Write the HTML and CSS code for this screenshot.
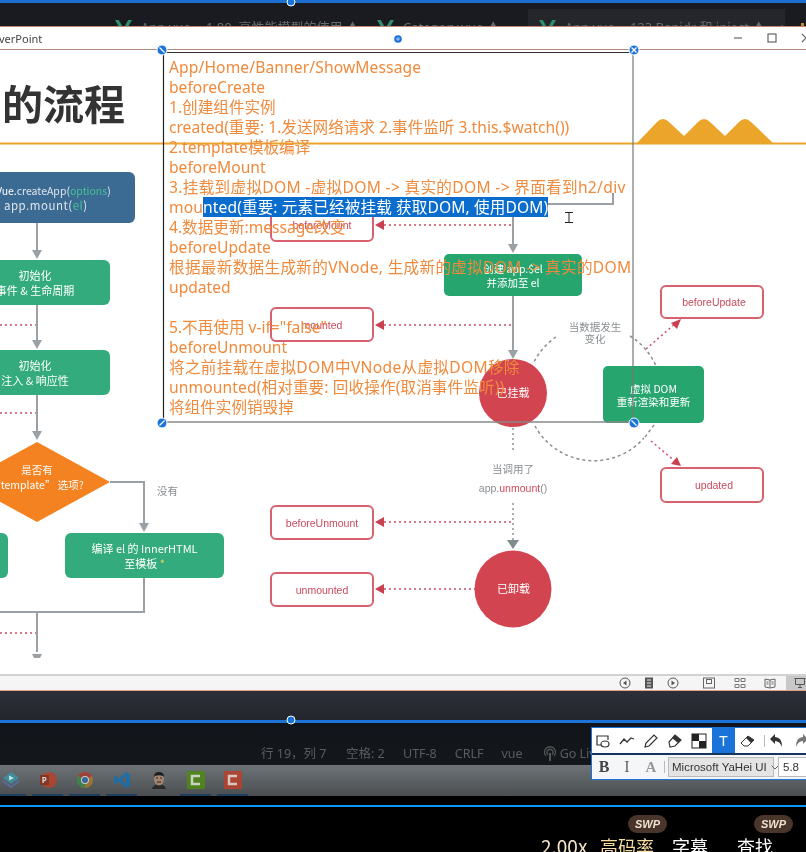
FILE: index.html
```html
<!DOCTYPE html>
<html lang="zh-CN">
<head>
    <meta charset="UTF-8">
    <meta name="viewport" content="width=device-width, initial-scale=1.0">
    <title>Vue lifecycle slide</title>
    <link rel="stylesheet" href="styles.css">
</head>
<body>
<div class="screen">

    <!-- editor tabs behind the slide window -->
    <div class="tabs">
        <div class="tab tab-one">
            <svg class="vue" viewBox="0 0 18 16"><path d="M0 0h4l5 9 5-9h4L9 16z" fill="#2f8f6b"/></svg>
            <span>App.vue -- 1.80. 高性能模型的使用 ▲</span>
        </div>
        <div class="tab tab-two">
            <svg class="vue" viewBox="0 0 18 16"><path d="M0 0h4l5 9 5-9h4L9 16z" fill="#2f8f6b"/></svg>
            <span>Category.vue ▲</span>
        </div>
        <div class="tab tab-three">
            <svg class="vue" viewBox="0 0 18 16"><path d="M0 0h4l5 9 5-9h4L9 16z" fill="#2f8f6b"/></svg>
            <span>App.vue -- 123 Banidr 和 inject ▲</span>
            <span class="tab-x">×</span>
        </div>
    </div>

    <div class="ppt">
        <div class="ppt-title">
            <span class="ppt-name">verPoint</span>
            <div class="win-btns">
                <svg class="win-btn" viewBox="0 0 12 12"><path d="M2 6h8" stroke="#666" stroke-width="1.2"/></svg>
                <svg class="win-btn" viewBox="0 0 12 12"><rect x="2" y="2" width="8" height="8" fill="none" stroke="#666" stroke-width="1.2"/></svg>
                <svg class="win-btn" viewBox="0 0 12 12"><path d="M2 2l8 8M10 2l-8 8" stroke="#666" stroke-width="1.2"/></svg>
            </div>
        </div>

        <div class="slide">
            <h1 class="slide-title">的流程</h1>

            <svg class="wires" viewBox="0 50 806 624">
                <!-- header rule and mountains -->
                <path d="M637 143 L657 122 Q663 116 669 122 L684 136 L698 122 Q704 116 710 122 L725 136 L739 122 Q745 116 751 122 L773 143 Z" fill="#eca52b"/>
                <path d="M0 143.500H806" stroke="#eca52b" stroke-width="2"/>

                <!-- left flow -->
                <g class="wire">
                    <path d="M37 223V252M37 305V345M37 395V436M110 482H144V526M144 578V612H0M37 612V652"/>
                </g>
                <g class="head-gray">
                    <path d="M32 250H42L37 259Z"/>
                    <path d="M32 340H42L37 349Z"/>
                    <path d="M32 431H42L37 440Z"/>
                    <path d="M139 523H149L144 532Z"/>
                    <path d="M32 654H42L40 658H34Z"/>
                </g>
                <g class="dots-pink">
                    <path d="M0 325H36M0 413H36M0 633H36"/>
                </g>

                <!-- centre flow -->
                <g class="wire">
                    <path d="M513 217V246M513 296V352M548 204H613V193"/>
                </g>
                <g class="head-gray">
                    <path d="M508 244H518L513 253Z"/>
                    <path d="M508 350H518L513 359Z"/>
                </g>
                <g class="dots-red">
                    <path d="M384 225H513M384 325H513M384 522H513M384 589H475"/>
                    <path d="M646 349L676 323M651 441L677 463"/>
                </g>
                <g class="head-red">
                    <path d="M384 220V230L375 225Z"/>
                    <path d="M384 320V330L375 325Z"/>
                    <path d="M384 517V527L375 522Z"/>
                    <path d="M384 584V594L375 589Z"/>
                    <path d="M671 323L681 319L677 329Z"/>
                    <path d="M671 464L681 466L677 457Z"/>
                </g>

                <!-- update loop -->
                <g class="dash-gray">
                    <path d="M556 337A67 67 0 0 0 533 364"/>
                    <path d="M630 336A67 67 0 0 1 656 366"/>
                    <path d="M535 426A67 67 0 0 0 644 438"/>
                    <path d="M645 437L654 425"/>
                </g>
                <g class="dots-gray">
                    <path d="M513 428V452M513 503V541"/>
                </g>
                <path d="M507 540H519L513 549Z" fill="#7f8c8d"/>

                <circle cx="513" cy="393" r="34" fill="#d2444f"/>
                <circle cx="513" cy="589" r="38.500" fill="#d2444f"/>
            </svg>

            <div class="node blue-box n-create">
                <span><i class="wh">Vue.</i>createApp(<i class="gn">options</i>)</span>
                <span class="sub-line">app.mount(<i class="gn">el</i>)</span>
            </div>
            <div class="node green n-init1"><span>初始化</span><span>事件 &amp; 生命周期</span></div>
            <div class="node green n-init2"><span>初始化</span><span>注入 &amp; 响应性</span></div>
            <svg class="diamond" viewBox="0 0 146 80"><path d="M73 0L146 40L73 80L0 40Z" fill="#f58220"/></svg>
            <div class="node n-diamond"><span>是否有</span><span>“template” 选项?</span></div>
            <span class="label n-no">没有</span>
            <div class="node green n-left"></div>
            <div class="node green n-compile"><span>编译 el 的 InnerHTML</span><span>至模板 <i class="star">*</i></span></div>

            <div class="hook n-bm">beforeMount</div>
            <div class="hook n-m">mounted</div>
            <div class="hook n-bun">beforeUnmount</div>
            <div class="hook n-un">unmounted</div>
            <div class="hook n-bu">beforeUpdate</div>
            <div class="hook n-u">updated</div>

            <div class="node dark-green n-el"><span>创建 app.$el</span><span>并添加至 el</span></div>
            <div class="node dark-green n-vdom"><span>虚拟 DOM</span><span>重新渲染和更新</span></div>
            <div class="node n-mounted"><span>已挂载</span></div>
            <div class="node n-unmounted"><span>已卸载</span></div>

            <div class="label n-change"><span>当数据发生</span><span>变化</span></div>
            <div class="label n-call"><span>当调用了</span><span class="call-code">app.<i class="red">unmount</i>()</span></div>

            <!-- text box drawn on top of the slide -->
            <div class="notes">
                <div class="loose-s">App/Home/Banner/ShowMessage</div>
                <div>beforeCreate</div>
                <div>1.创建组件实例</div>
                <div>created(重要: 1.发送网络请求 2.事件监听 3.this.$watch())</div>
                <div>2.template模板编译</div>
                <div>beforeMount</div>
                <div class="loose">3.挂载到虚拟DOM -虚拟DOM -&gt; 真实的DOM -&gt; 界面看到h2/div</div>
                <div class="loose-s">mou<span class="picked">nted(重要: 元素已经被挂载 获取DOM, 使用DOM)</span></div>
                <div>4.数据更新:message改变</div>
                <div>beforeUpdate</div>
                <div class="loose">根据最新数据生成新的VNode, 生成新的虚拟DOM -&gt; 真实的DOM</div>
                <div>updated</div>
                <div>&nbsp;</div>
                <div>5.不再使用 v-if="false"</div>
                <div>beforeUnmount</div>
                <div class="loose">将之前挂载在虚拟DOM中VNode从虚拟DOM移除</div>
                <div class="loose-s">unmounted(相对重要: 回收操作(取消事件监听))</div>
                <div>将组件实例销毁掉</div>
            </div>
        </div>

        <div class="ppt-status">
            <svg class="st-icon" viewBox="0 0 12 12"><circle cx="6" cy="6" r="5" fill="none" stroke="#555"/><path d="M7.500 3.500V8.500L4 6Z" fill="#555"/></svg>
            <svg class="st-icon st-list" viewBox="0 0 12 12"><rect x="2" y="0.500" width="8" height="11" fill="#555"/><path d="M4 3H8M4 6H8M4 9H8" stroke="#eee"/></svg>
            <svg class="st-icon st-next" viewBox="0 0 12 12"><circle cx="6" cy="6" r="5" fill="none" stroke="#555"/><path d="M4.500 3.500V8.500L8 6Z" fill="#555"/></svg>
            <svg class="st-icon st-normal" viewBox="0 0 12 12"><rect x="0.500" y="1" width="11" height="10" fill="none" stroke="#666"/><rect x="3.500" y="2.500" width="5" height="4" fill="none" stroke="#666"/></svg>
            <svg class="st-icon st-sorter" viewBox="0 0 12 12"><path d="M1 1.500h4v3H1zM7 1.500h4v3H7zM1 7.500h4v3H1zM7 7.500h4v3H7z" fill="none" stroke="#777"/></svg>
            <svg class="st-icon st-read" viewBox="0 0 12 12"><path d="M1 2l5 1 5-1v8l-5 1-5-1zM6 3v8M2.500 5H4.500M7.500 5H9.500M2.500 7H4.500M7.500 7H9.500" fill="none" stroke="#666"/></svg>
            <div class="st-show">
                <svg class="st-icon" viewBox="0 0 12 12"><path d="M0.500 1.500H11.500M1.500 1.500V7.500H10.500V1.500M6 7.500V10.500M4 10.500H8" fill="none" stroke="#555"/></svg>
            </div>
        </div>
    </div>

    <div class="gap"></div>
    <div class="rule-blue"></div>

    <div class="vs-status">
        <span class="st-a">行 19，列 7</span>
        <span class="st-b">空格: 2</span>
        <span class="st-c">UTF-8</span>
        <span class="st-c">CRLF</span>
        <span class="st-c">vue</span>
        <svg class="live" viewBox="0 0 14 16"><path d="M3 10A5.500 5.500 0 1 1 11 10M5 8.500A3 3 0 1 1 9 8.500" fill="none" stroke="#555" stroke-width="1.300"/><path d="M6 7H8V15H6Z" fill="#555"/></svg>
        <span class="st-live">Go Live</span>
    </div>

    <div class="taskbar">
        <div class="task on">
            <svg viewBox="0 0 18 18"><path d="M9 1L17 7L9 13L1 7Z" fill="#3c92a8"/><path d="M1 10L9 16L17 10" fill="none" stroke="#5a6fa8" stroke-width="2"/><path d="M7 4.500L12 7L7 9.500Z" fill="#cfe"/></svg>
        </div>
        <div class="task on">
            <svg viewBox="0 0 18 18"><circle cx="10" cy="9" r="8" fill="#b5432a"/><rect x="1" y="4" width="9" height="10" fill="#8c2f1c"/><text x="2.800" y="12" class="ppt-p">P</text></svg>
        </div>
        <div class="task on">
            <svg viewBox="0 0 18 18"><circle cx="9" cy="9" r="8" fill="#a9772a"/><path d="M9 9L2.100 5A8 8 0 0 1 15.900 5Z" fill="#a83a30"/><path d="M9 9L2.100 5A8 8 0 0 0 9 17Z" fill="#3a8a4a"/><circle cx="9" cy="9" r="4" fill="#dcdcdc"/><circle cx="9" cy="9" r="3" fill="#3269a8"/></svg>
        </div>
        <div class="task on">
            <svg viewBox="0 0 18 18"><path d="M13 1L17 3V15L13 17L6 10.500L2.500 13.500L1 12.500V5.500L2.500 4.500L6 7.500ZM13 5.500L9 9L13 12.500Z" fill="#1a6fae"/></svg>
        </div>
        <div class="task">
            <svg viewBox="0 0 18 18"><path d="M2 18Q3 14 7 13.500H11Q15 14 16 18Z" fill="#222"/><ellipse cx="9" cy="8" rx="5" ry="6.500" fill="#b08a70"/><path d="M4 6Q4 1 9 1T14 6L13 5Q9 3.500 5 5Z" fill="#111"/><path d="M6 7H8M10 7H12M7 11H11" stroke="#222"/></svg>
        </div>
        <div class="task on">
            <svg viewBox="0 0 18 18"><rect width="18" height="18" rx="1" fill="#4f8a14"/><path d="M13 5H5V13H13" fill="none" stroke="#dfe8d0" stroke-width="2.500"/></svg>
        </div>
        <div class="task on">
            <svg viewBox="0 0 18 18"><rect width="18" height="18" rx="1" fill="#b8412c"/><path d="M13 5H5V13H13" fill="none" stroke="#eed8d0" stroke-width="2.500"/></svg>
        </div>
    </div>

    <div class="strip"></div>
    <div class="rule-cyan"></div>

    <div class="player">
        <span class="pl-speed">2.00x</span>
        <span class="pl-item pl-rate">高码率<b class="swp">SWP</b></span>
        <span class="pl-item pl-sub">字幕</span>
        <span class="pl-item pl-find">查找<b class="swp">SWP</b></span>
    </div>

    <!-- draw tool floating over everything -->
    <div class="tool">
        <div class="tool-row">
            <svg class="t-icon" viewBox="0 0 16 16"><path d="M6 12H2V3H13V7" fill="none" stroke="#333" stroke-width="1.200"/><ellipse cx="10" cy="11" rx="4" ry="3" fill="#fff" stroke="#333" stroke-width="1.200"/></svg>
            <svg class="t-icon" viewBox="0 0 16 16"><path d="M1 11L5 6L8 9L12 5L15 6" fill="none" stroke="#333" stroke-width="1.300"/></svg>
            <svg class="t-icon" viewBox="0 0 16 16"><path d="M2 14L3 10L11 2L14 5L6 13Z" fill="none" stroke="#333" stroke-width="1.200"/></svg>
            <svg class="t-icon" viewBox="0 0 16 16"><path d="M3 14L2 9L8 2L14 7L8 13Z" fill="none" stroke="#333" stroke-width="1.200"/><path d="M8 2L14 7L11 10L5 5Z" fill="#333"/></svg>
            <svg class="t-icon" viewBox="0 0 16 16"><rect x="1" y="1" width="14" height="14" fill="#fff" stroke="#222"/><path d="M1 1H8V8H1ZM8 8H15V15H8Z" fill="#222"/></svg>
            <span class="t-on">T</span>
            <svg class="t-icon" viewBox="0 0 16 16"><path d="M1 10L8 3L14 7L8 13H4Z" fill="#fff" stroke="#333"/><path d="M6 5L8 3L14 7L11 10Z" fill="#333"/></svg>
            <span class="t-sep t-sep-top"></span>
            <svg class="t-icon" viewBox="0 0 16 16"><path d="M1 6L6 1V4Q13 4 13 14Q11 8 6 8V11Z" fill="#333"/></svg>
            <svg class="t-icon" viewBox="0 0 16 16"><path d="M15 6L10 1V4Q3 4 3 14Q5 8 10 8V11Z" fill="#777"/></svg>
        </div>
        <div class="tool-row row-two">
            <b class="t-b">B</b>
            <i class="t-i">I</i>
            <span class="t-a">A</span>
            <span class="t-sep"></span>
            <span class="t-font">Microsoft YaHei UI<svg class="chev" viewBox="0 0 8 5"><path d="M0.500 0.500L4 4L7.500 0.500" fill="none" stroke="#666"/></svg></span>
            <span class="t-size">5.8</span>
        </div>
    </div>

    <!-- selection frame and handles -->
    <svg class="marks" viewBox="0 0 806 852">
        <path d="M163 52.500H634" stroke="#333" stroke-width="1.200"/>
        <path d="M163.500 52V422" stroke="#222" stroke-width="1.200"/>
        <path d="M633 52V422" stroke="#777" stroke-width="1.200"/>
        <path d="M163 422H634" stroke="#888" stroke-width="1.500"/>
        <path d="M565 212.500H573M565 222.500H573M569 212.500V222.500" stroke="#222"/>
        <g class="knob">
            <circle cx="291" cy="2" r="4"/>
            <circle cx="291" cy="720" r="4"/>
            <circle cx="162" cy="50" r="5"/>
            <circle cx="634" cy="50" r="5"/>
            <circle cx="162" cy="423" r="5"/>
            <circle cx="634" cy="423" r="5"/>
        </g>
        <g class="knob-mark">
            <path d="M159.500 47.500L164.500 52.500M631.500 47.500L636.500 52.500M636.500 47.500L631.500 52.500M159.500 425.500L164.500 420.500M631.500 420.500L636.500 425.500"/>
        </g>
        <circle cx="398" cy="39" r="2.800" fill="#8ab8ee" stroke="#1a73d9" stroke-width="2"/>
    </svg>
</div>
</body>
</html>
```

FILE: styles.css
```css
* {
    box-sizing: border-box;
}

body {
    margin: 0;
    background: #000;
    font-family: "Noto Sans", "Noto Sans CJK SC", sans-serif;
}

i {
    font-style: normal;
}

.screen {
    position: relative;
    width: 806px;
    height: 852px;
    overflow: hidden;
    display: flex;
    flex-direction: column;
    filter: blur(0.3px);
}

/* editor tabs */
.tabs {
    position: relative;
    height: 26px;
    flex: none;
    display: flex;
    background: #191b20;
    border-top: 3px solid #1c6fd0;
    overflow: hidden;
}

.tabs::before {
    content: "";
    position: absolute;
    left: 248px;
    top: -3px;
    width: 121px;
    height: 3px;
    background: #5f86b8;
}

.tabs::after {
    content: "";
    position: absolute;
    left: 801px;
    top: 20px;
    width: 3px;
    height: 3px;
    background: #c8872c;
}

.tab {
    display: flex;
    align-items: flex-start;
    gap: 9px;
    height: 23px;
    padding-top: 17px;
    color: #666d70;
    font-size: 13px;
    line-height: 14px;
    white-space: nowrap;
    overflow: hidden;
    flex: none;
}

.tab-one {
    width: 377px;
    padding-left: 115px;
}

.tab-two {
    width: 151px;
}

.tab-three {
    width: 257px;
    height: 17px;
    margin-top: 6px;
    padding-top: 11px;
    padding-left: 11px;
    background: #24262c;
}

.tab-x {
    margin-left: 6px;
}

.vue {
    width: 17px;
    height: 15px;
    flex: none;
}

/* powerpoint window */
.ppt {
    height: 665px;
    flex: none;
    display: flex;
    flex-direction: column;
    background: #fff;
    border-top: 1px solid #c08a70;
    border-bottom: 1px solid #e8a080;
}

.ppt-title {
    height: 23px;
    flex: none;
    display: flex;
    align-items: center;
    justify-content: space-between;
    border-bottom: 1px solid #b08a78;
    font-size: 11px;
    color: #444;
}

.ppt-name {
    margin-left: -1px;
}

.win-btns {
    display: flex;
    gap: 22px;
    margin-right: -6px;
}

.win-btn {
    width: 12px;
    height: 12px;
}

.slide {
    position: relative;
    height: 624px;
    flex: none;
    overflow: hidden;
}

.slide-title {
    position: absolute;
    left: 2px;
    top: 27px;
    margin: 0;
    font-family: "Noto Sans CJK SC", sans-serif;
    font-size: 41px;
    line-height: 50px;
    font-weight: 700;
    color: #333;
}

.wires {
    position: absolute;
    left: 0;
    top: 0;
    width: 806px;
    height: 624px;
}

.wire path {
    fill: none;
    stroke: #9aa0a4;
    stroke-width: 2;
}

.head-gray path {
    fill: #9aa0a4;
}

.head-red path {
    fill: #c9404f;
}

.dots-pink path,
.dots-red path {
    fill: none;
    stroke: #c9506a;
    stroke-width: 1.500;
    stroke-dasharray: 2 3;
}

.dots-gray path {
    fill: none;
    stroke: #8a9496;
    stroke-width: 1.500;
    stroke-dasharray: 2 3;
}

.dash-gray path {
    fill: none;
    stroke: #8a8f92;
    stroke-width: 1.500;
    stroke-dasharray: 3 3;
}

/* diagram nodes */
.node {
    position: absolute;
    display: flex;
    flex-direction: column;
    align-items: center;
    justify-content: center;
    gap: 2px;
    font-family: "Noto Sans CJK SC", sans-serif;
    font-size: 11px;
    line-height: 13px;
    color: #fff;
    white-space: nowrap;
}

.green {
    background: #33ab7d;
    border-radius: 6px;
}

.dark-green {
    background: #27a56f;
    border-radius: 5px;
}

.blue-box {
    left: -40px;
    top: 122px;
    width: 175px;
    height: 51px;
    padding-left: 36px;
    align-items: flex-start;
    gap: 0;
    background: #3b6a93;
    border-radius: 6px;
    font-size: 10.500px;
    line-height: 15px;
    color: #dfe6ec;
}

.blue-box .sub-line {
    margin-left: 8px;
    font-size: 11.500px;
    letter-spacing: 0.500px;
}

.gn {
    color: #45c394;
}

.wh {
    color: #fff;
}

.n-init1 {
    left: -40px;
    top: 210px;
    width: 155px;
    height: 45px;
}

.n-init1 {
    width: 150px;
}

.n-init2 {
    left: -40px;
    top: 300px;
    width: 150px;
    height: 45px;
}

.diamond {
    position: absolute;
    left: -36px;
    top: 392px;
    width: 146px;
    height: 80px;
}

.n-diamond {
    left: -40px;
    top: 411px;
    width: 154px;
    height: 32px;
    font-size: 10.500px;
}

.n-left {
    left: -40px;
    top: 483px;
    width: 48px;
    height: 45px;
}

.n-compile {
    left: 65px;
    top: 483px;
    width: 159px;
    height: 45px;
}

.star {
    color: #e8d060;
}

.hook {
    position: absolute;
    left: 270px;
    width: 104px;
    display: flex;
    align-items: center;
    justify-content: center;
    background: #fff;
    border: 2px solid #d9606e;
    border-radius: 6px;
    font-family: "Liberation Sans", sans-serif;
    font-size: 10.500px;
    color: #c94a5e;
}

.n-bm {
    top: 157px;
    height: 35px;
}

.n-m {
    top: 257px;
    height: 35px;
}

.n-bun {
    top: 455px;
    height: 35px;
}

.n-un {
    top: 522px;
    height: 35px;
}

.n-bu {
    left: 660px;
    top: 235px;
    height: 34px;
    padding-left: 4px;
}

.n-u {
    left: 660px;
    top: 417px;
    height: 36px;
    padding-left: 4px;
}

.n-el {
    left: 444px;
    top: 204px;
    width: 138px;
    height: 42px;
    gap: 1px;
    font-size: 10.500px;
}

.n-vdom {
    left: 603px;
    top: 316px;
    width: 101px;
    height: 57px;
    gap: 0;
    font-size: 10.500px;
}

.n-mounted {
    left: 479px;
    top: 308px;
    width: 68px;
    height: 68px;
}

.n-unmounted {
    left: 475px;
    top: 500px;
    width: 77px;
    height: 77px;
}

.label {
    position: absolute;
    display: flex;
    flex-direction: column;
    align-items: center;
    font-size: 10.500px;
    color: #8a8f92;
    white-space: nowrap;
}

.n-no {
    left: 157px;
    top: 433px;
}

.n-change {
    left: 565px;
    top: 271px;
    width: 60px;
    line-height: 12px;
}

.n-call {
    left: 473px;
    top: 411px;
    width: 80px;
    gap: 3px;
    line-height: 16px;
}

.call-code {
    font-family: "Liberation Sans", sans-serif;
}

.red {
    color: #d04a5a;
}

/* text box on the slide */
.notes {
    position: absolute;
    left: 169px;
    top: 7px;
    font-size: 15.600px;
    line-height: 20px;
    color: #f08a3c;
    white-space: nowrap;
}

.notes div {
    height: 20px;
}

.notes .loose {
    letter-spacing: 0.320px;
}

.notes .loose-s {
    letter-spacing: 0.120px;
}

.picked {
    display: inline-block;
    height: 20px;
    background: #0a6ccc;
    color: #fff;
}

/* slide status bar */
.ppt-status {
    height: 16px;
    flex: 1;
    display: flex;
    align-items: center;
    padding-left: 619px;
    background: #f5f5f5;
    border-top: 2px solid #d2d2d2;
}

.st-icon {
    width: 12px;
    height: 12px;
    flex: none;
}

.st-list {
    margin-left: 12px;
}

.st-next {
    margin-left: 12px;
}

.st-normal {
    margin-left: 24px;
}

.st-sorter {
    margin-left: 19px;
}

.st-read {
    margin-left: 18px;
}

.st-show {
    width: 24px;
    height: 14px;
    margin-left: 10px;
    padding-left: 8px;
    display: flex;
    align-items: center;
    background: #c8c8c8;
}

.gap {
    height: 29px;
    flex: none;
    background: linear-gradient(#2c2f38, #24262d);
}

.rule-blue {
    height: 3px;
    flex: none;
    background: #1c74d8;
}

/* vs code status line */
.vs-status {
    height: 42px;
    flex: none;
    display: flex;
    align-items: flex-end;
    padding: 0 0 2px 261px;
    background: linear-gradient(#11141a, #14171b);
    font-size: 12.500px;
    line-height: 18px;
    color: #5a5d60;
    white-space: nowrap;
}

.st-a {
    width: 85px;
}

.st-b {
    width: 57px;
}

.st-c {
    margin-right: 18px;
}

.live {
    width: 14px;
    height: 16px;
    margin: 0 3px 1px 2px;
}

/* windows taskbar */
.taskbar {
    height: 31px;
    flex: none;
    display: grid;
    grid-template-columns: repeat(7, 37px);
    margin-left: -8px;
    background: linear-gradient(#6d7377, #4a4e51);
}

.task {
    margin: 0 3px;
    display: flex;
    align-items: flex-start;
    justify-content: center;
    padding-top: 6px;
    border-bottom: 2px solid transparent;
}

.task.on {
    border-bottom-color: #1f3f60;
}

.task svg {
    width: 18px;
    height: 18px;
    opacity: 0.85;
}

.ppt-p {
    font-size: 8px;
    font-weight: 700;
    fill: #eee;
}

.strip {
    height: 9px;
    flex: none;
    background: #000;
}

.rule-cyan {
    height: 2px;
    flex: none;
    background: #0a9cf5;
}

/* player controls */
.player {
    flex: 1;
    display: flex;
    padding: 26px 0 0 541px;
    background: #000;
    font-family: "Noto Sans CJK SC", sans-serif;
    font-size: 18px;
    line-height: 26px;
    color: #fff;
    white-space: nowrap;
}

.pl-speed {
    width: 59px;
    font-size: 19px;
    color: #f5e6c8;
}

.pl-item {
    position: relative;
}

.pl-rate {
    width: 72px;
    color: #f8dca0;
}

.pl-sub {
    width: 65px;
}

.pl-find {
    width: 40px;
}

.swp {
    position: absolute;
    top: -18px;
    height: 18px;
    width: 39px;
    border-radius: 9px;
    background: #4a352a;
    font-family: "Liberation Sans", sans-serif;
    font-size: 11px;
    line-height: 18px;
    font-style: italic;
    font-weight: 700;
    color: #f0e2d0;
    text-align: center;
}

.pl-rate .swp {
    left: 28px;
}

.pl-find .swp {
    left: 17px;
}

/* draw tool */
.tool {
    position: absolute;
    left: 591px;
    top: 727px;
    width: 220px;
    height: 53px;
    background: #14355f;
    border: 1px solid #1c74d8;
    border-width: 1px 0 1px 1px;
    display: flex;
    flex-direction: column;
    gap: 2px;
}

.tool-row {
    height: 25px;
    display: flex;
    align-items: center;
    gap: 8px;
    padding-left: 3px;
    background: #fff;
}

.row-two {
    height: 24px;
    gap: 0;
    padding-left: 0;
    background: #f4f6f8;
}

.t-icon {
    width: 16px;
    height: 16px;
    flex: none;
}

.t-on {
    width: 23px;
    height: 25px;
    margin: 0 -3px;
    flex: none;
    background: #1a73d9;
    color: #fff;
    font-size: 15px;
    line-height: 25px;
    text-align: center;
}

.t-sep {
    width: 1px;
    height: 12px;
    background: #bbb;
    flex: none;
}

.t-sep-top {
    margin-right: -4px;
}

.t-b,
.t-i,
.t-a {
    width: 24px;
    flex: none;
    font-family: "Liberation Serif", serif;
    font-size: 16px;
    text-align: center;
    color: #444;
}

.t-i {
    width: 22px;
    color: #666;
}

.t-a {
    width: 26px;
    font-size: 15px;
    font-weight: 700;
    color: #999;
}

.t-font {
    width: 106px;
    height: 20px;
    margin-left: 3px;
    padding-left: 3px;
    flex: none;
    display: flex;
    align-items: center;
    gap: 4px;
    background: #e4e4e4;
    border: 1px solid #bbb;
    font-family: "Liberation Sans", sans-serif;
    font-size: 11.500px;
    color: #333;
    white-space: nowrap;
}

.chev {
    width: 8px;
    height: 5px;
    flex: none;
}

.t-size {
    width: 40px;
    height: 20px;
    margin-left: 4px;
    padding-left: 4px;
    flex: none;
    background: #fff;
    border: 1px solid #bbb;
    font-family: "Liberation Sans", sans-serif;
    font-size: 11.500px;
    line-height: 18px;
    color: #333;
}

/* frame and handles */
.marks {
    position: absolute;
    left: 0;
    top: 0;
    width: 806px;
    height: 852px;
}

.knob circle {
    fill: #1a73d9;
    stroke: #fff;
    stroke-width: 1;
}

.knob-mark path {
    fill: none;
    stroke: #fff;
    stroke-width: 1.300;
}
```
